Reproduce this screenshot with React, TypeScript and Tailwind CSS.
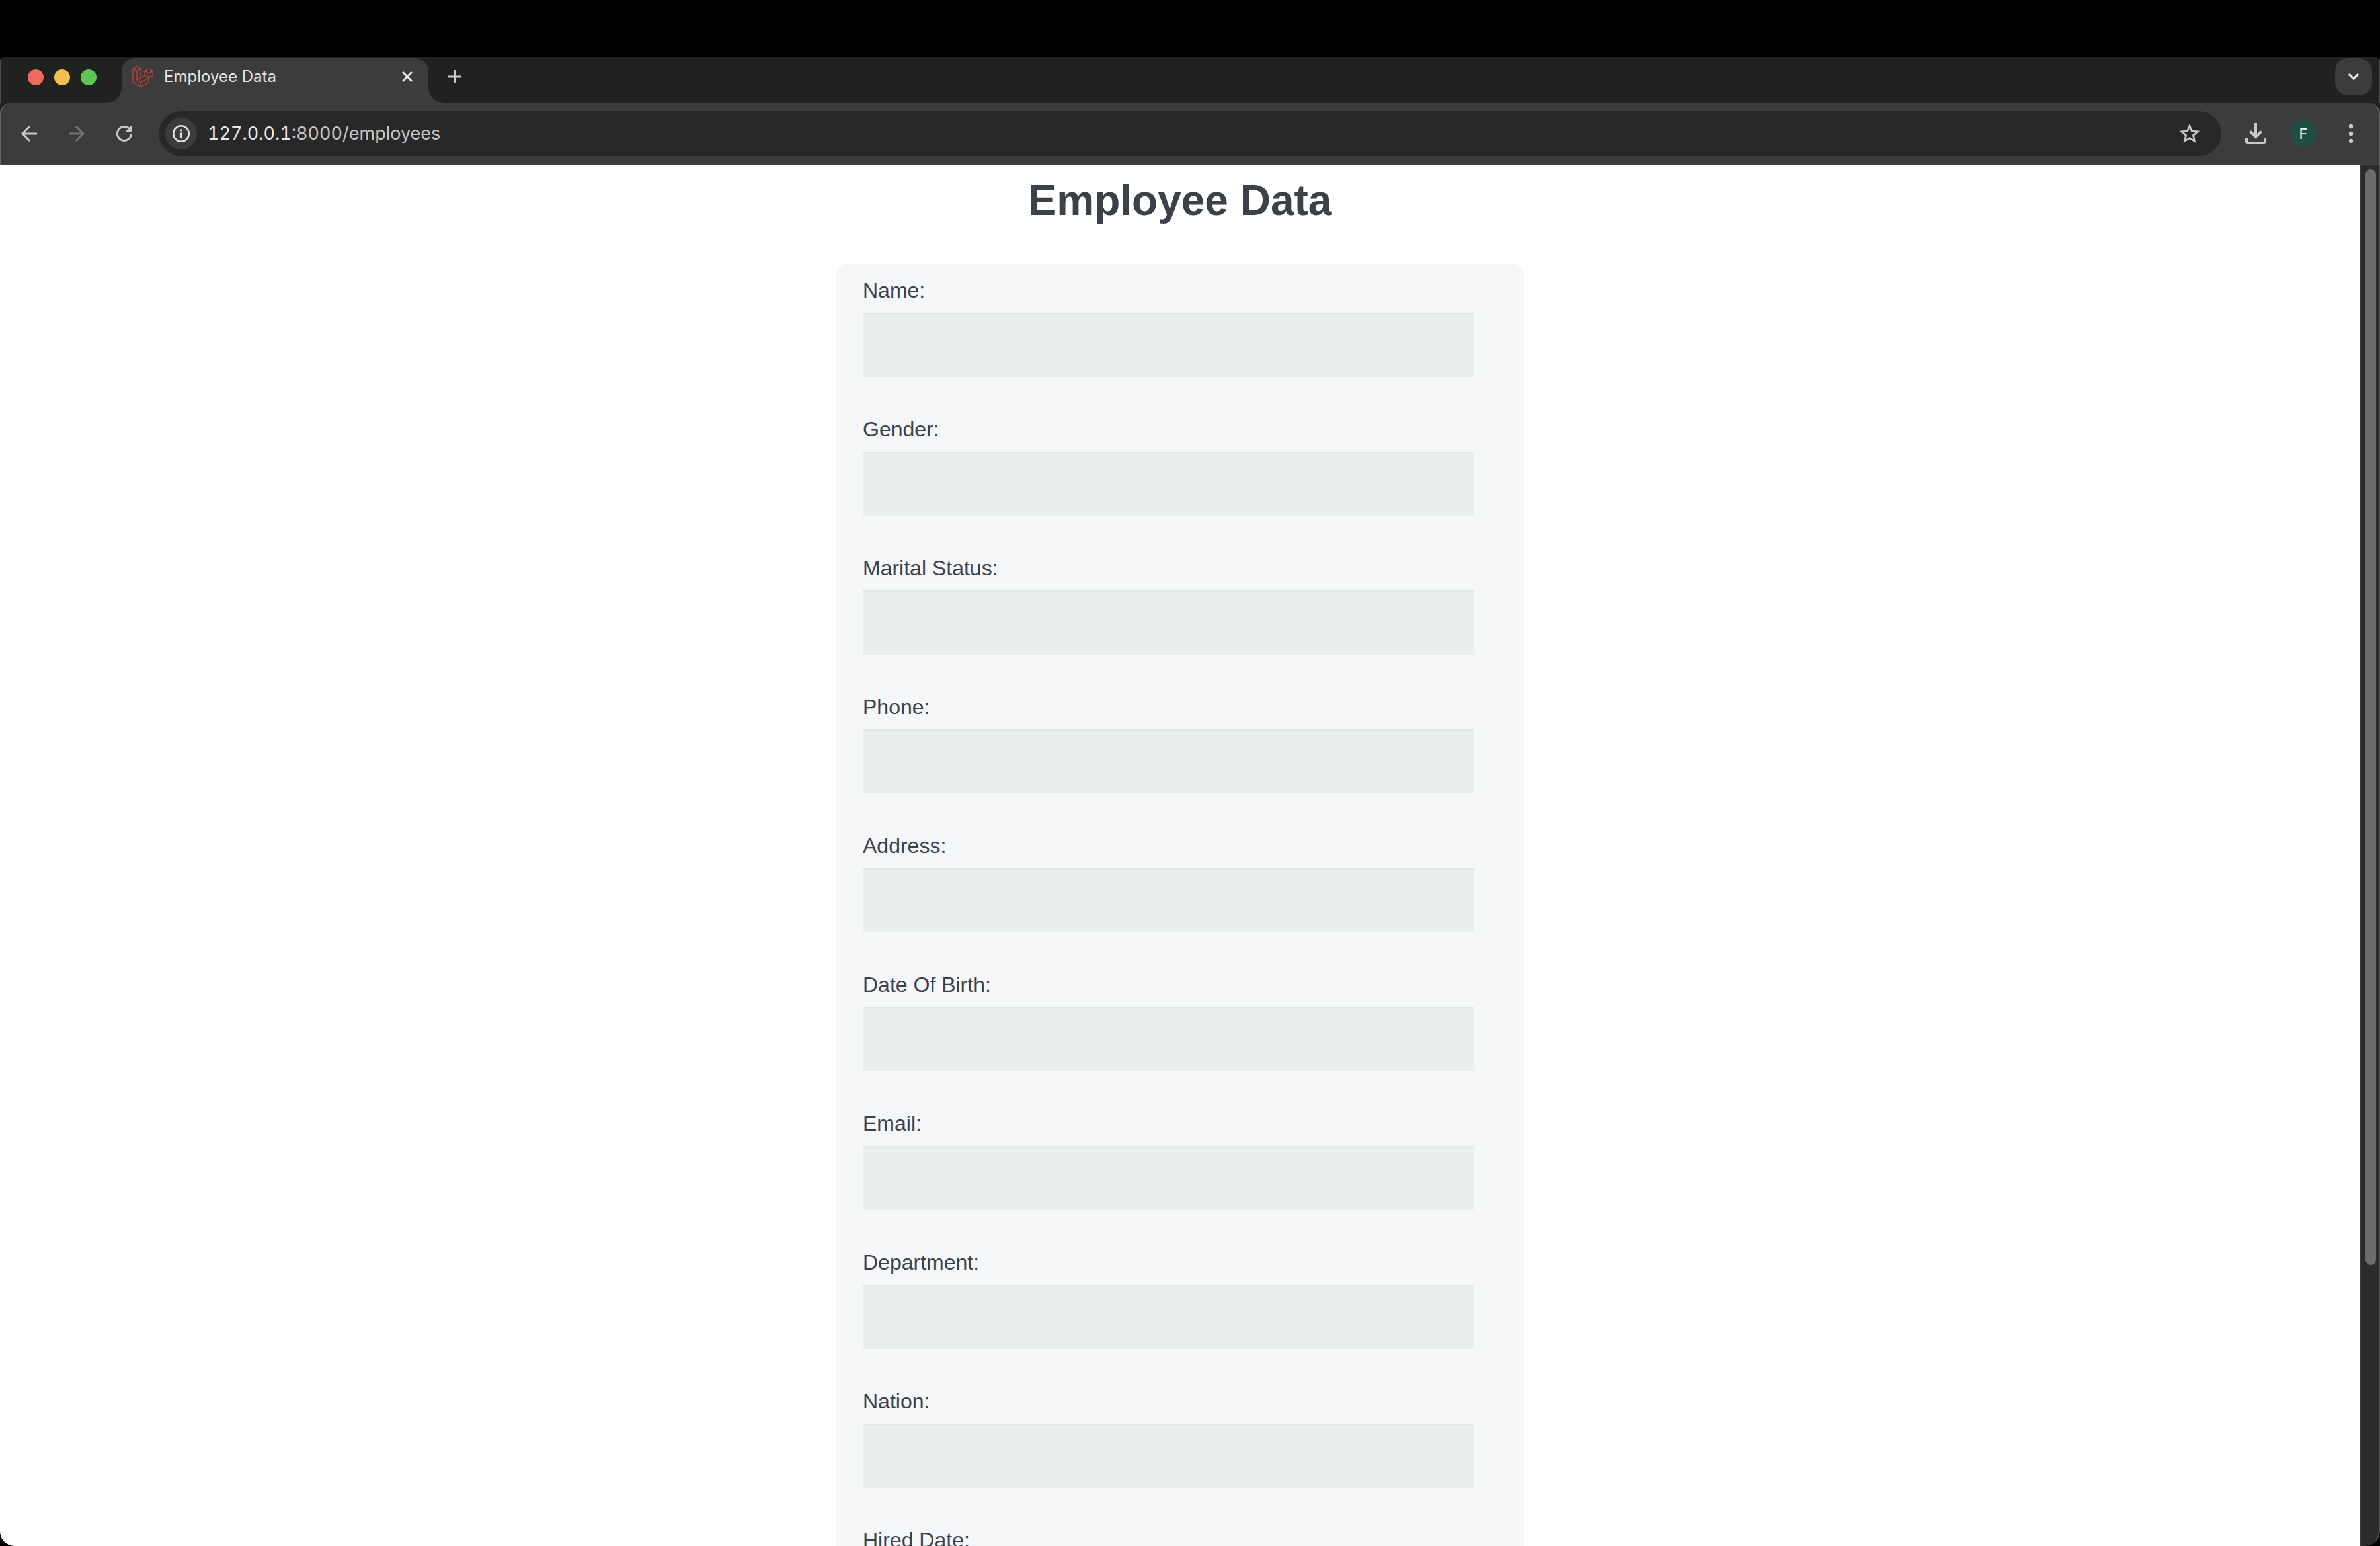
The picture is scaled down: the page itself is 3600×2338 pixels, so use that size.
import React from "react";
import { SiLaravel } from "react-icons/si";

const FIELDS = [
  { id: "name", label: "Name:" },
  { id: "gender", label: "Gender:" },
  { id: "marital-status", label: "Marital Status:" },
  { id: "phone", label: "Phone:" },
  { id: "address", label: "Address:" },
  { id: "date-of-birth", label: "Date Of Birth:" },
  { id: "email", label: "Email:" },
  { id: "department", label: "Department:" },
  { id: "nation", label: "Nation:" },
  { id: "hired-date", label: "Hired Date:" },
];

function TabStrip() {
  return (
    <div className="flex h-[70px] items-start border-x-2 border-[#4c4d4c] bg-[#202220] pt-[2px]">
      <div className="flex h-[58px] w-[182px] shrink-0 items-center gap-4 pl-10">
        <button aria-label="Close window" className="size-6 rounded-full bg-[#ed6a5f]" />
        <button aria-label="Minimize window" className="size-6 rounded-full bg-[#f6be50]" />
        <button aria-label="Zoom window" className="size-6 rounded-full bg-[#61c555]" />
      </div>
      <div className="relative flex h-[68px] w-[464px] shrink-0 items-start rounded-t-[20px] bg-[#3c3c3c] px-4 pt-3">
        <svg className="absolute bottom-0 -left-6 size-6" viewBox="0 0 24 24" aria-hidden="true">
          <path d="M24 0v24H0A24 24 0 0 0 24 0Z" fill="#3c3c3c" />
        </svg>
        <svg className="absolute -right-6 bottom-0 size-6" viewBox="0 0 24 24" aria-hidden="true">
          <path d="M0 0v24h24A24 24 0 0 1 0 0Z" fill="#3c3c3c" />
        </svg>
        <SiLaravel className="size-8 shrink-0 text-[#f0402f]" aria-hidden="true" />
        <span className="ml-4 flex-1 text-2xl leading-8 text-[#e3e3e3]">Employee Data</span>
        <button aria-label="Close tab" className="flex size-8 items-center justify-center">
          <svg className="size-4" viewBox="0 0 16 16" fill="none" stroke="#e8e8e8" strokeWidth="3" aria-hidden="true">
            <path d="M1 1l14 14M15 1L1 15" />
          </svg>
        </button>
      </div>
      <button aria-label="New tab" className="ml-6 mt-3 flex size-8 shrink-0 items-center justify-center">
        <svg className="size-5" viewBox="0 0 20 20" fill="none" stroke="#c7c7c7" strokeWidth="3" aria-hidden="true">
          <path d="M10 0v20M0 10h20" />
        </svg>
      </button>
      <div className="flex-1" />
      <button
        aria-label="Search tabs"
        className="mr-[10px] flex size-14 shrink-0 items-center justify-center rounded-[20px] bg-[#3c3c3c]"
      >
        <svg className="size-5" viewBox="0 0 20 20" fill="none" stroke="#e3e3e3" strokeWidth="3.400" aria-hidden="true">
          <path d="M2.800 6L10 13.200 17.200 6" />
        </svg>
      </button>
    </div>
  );
}

function Toolbar() {
  return (
    <div className="bg-[#202220]">
      <div className="flex h-[94px] items-center rounded-t-[16px] border-x-2 border-b-2 border-x-[#666666] border-b-[#474546] bg-[#3c3c3c] px-[26px]">
        <button aria-label="Back" className="mr-10 flex size-8 items-center justify-center">
          <svg className="size-6" viewBox="0 0 24 24" fill="none" stroke="#c7c7c7" strokeWidth="3" aria-hidden="true">
            <path d="M13 1L2 12l11 11M2 12h22" />
          </svg>
        </button>
        <button aria-label="Forward" className="mr-10 flex size-8 items-center justify-center">
          <svg className="size-6" viewBox="0 0 24 24" fill="none" stroke="#757575" strokeWidth="3" aria-hidden="true">
            <path d="M11 1l11 11-11 11M22 12H0" />
          </svg>
        </button>
        <button aria-label="Reload" className="mr-9 flex size-8 items-center justify-center">
          <svg className="size-6" viewBox="0 0 24 24" fill="none" stroke="#c7c7c7" strokeWidth="3" aria-hidden="true">
            <path d="M22.400 13A10.500 10.500 0 1 1 20.500 5.800L22 8" />
            <path d="M22.500 0v8.500H14" />
          </svg>
        </button>
        <form
          className="flex h-[68px] min-w-0 flex-1 items-center rounded-full bg-[#282828] pl-[10px] pr-8"
          onSubmit={(e) => e.preventDefault()}
        >
          <button
            type="button"
            aria-label="View site information"
            className="flex size-12 shrink-0 items-center justify-center rounded-full bg-[#3c3c3c]"
          >
            <svg className="size-7" viewBox="0 0 28 28" fill="none" stroke="#e3e3e3" strokeWidth="2.600" aria-hidden="true">
              <circle cx="14" cy="14" r="11.800" />
              <path d="M14 12.500v8M14 7.500v2.800" />
            </svg>
          </button>
          <a href="#employees" className="ml-4 flex-1 text-[27px] leading-9 tabular-nums text-[#c7c7c7]">
            <span className="text-[#e8e8e8]">127.0.0.1</span>:8000/employees
          </a>
          <button type="button" aria-label="Bookmark this tab" className="flex size-8 items-center justify-center">
            <svg className="size-8" viewBox="0 0 32 32" fill="none" stroke="#c7c7c7" strokeWidth="2.800" aria-hidden="true">
              <path d="M16 4.200l3.400 7.900 8.600.8-6.500 5.700 1.900 8.500L16 22.600l-7.400 4.500 1.900-8.500L4 12.900l8.600-.8Z" />
            </svg>
          </button>
        </form>
        <button aria-label="Downloads" className="ml-9 flex size-8 items-center justify-center">
          <svg className="size-8" viewBox="0 0 32 32" fill="none" stroke="#c7c7c7" strokeWidth="4" aria-hidden="true">
            <path d="M16 0v21M7.500 12.500L16 21l8.500-8.500" />
            <path d="M2 22v6q0 2 2 2h24q2 0 2-2v-6" />
          </svg>
        </button>
        <button
          aria-label="Profile"
          className="ml-9 flex size-10 shrink-0 items-center justify-center rounded-full bg-[#1f4e43] text-[22px] leading-none text-white"
        >
          F
        </button>
        <button aria-label="Menu" className="ml-9 flex size-8 items-center justify-center">
          <svg className="size-8" viewBox="0 0 32 32" fill="#c7c7c7" aria-hidden="true">
            <circle cx="16" cy="5" r="3.200" />
            <circle cx="16" cy="16" r="3.200" />
            <circle cx="16" cy="27" r="3.200" />
          </svg>
        </button>
      </div>
    </div>
  );
}

function EmployeeForm() {
  return (
    <main className="min-w-0 flex-1 overflow-hidden bg-white pt-4 font-['Liberation_Sans',Arial,sans-serif] text-[#3c4148]">
      <h1 className="mb-[60px] text-center text-[64px] font-bold leading-[74px]">Employee Data</h1>
      <form className="mx-auto flex max-w-[1040px] flex-col gap-[61px] rounded-[16px] bg-[#f5f7f9] px-10 pb-10 pt-[21px]">
        {FIELDS.map((field) => (
          <div key={field.id} className="flex flex-col gap-4 pr-9">
            <label htmlFor={field.id} className="text-[32px] leading-9">
              {field.label}
            </label>
            <input
              id={field.id}
              name={field.id}
              type="text"
              className="h-[97px] w-full border-t-2 border-[#e0e7e6] bg-[#e8efee] px-4 text-[32px] outline-none"
            />
          </div>
        ))}
      </form>
    </main>
  );
}

export default function App() {
  return (
    <div className="flex h-screen flex-col overflow-hidden bg-black pt-[86px] font-['Inter',sans-serif]">
      <div className="flex min-h-0 flex-1 flex-col overflow-hidden rounded-b-[22px] rounded-t-[6px]">
        <TabStrip />
        <Toolbar />
        <div className="flex min-h-0 flex-1">
          <EmployeeForm />
          <div className="w-[30px] shrink-0 rounded-br-[22px] border-l-2 border-r-2 border-l-[#3c3c3c] border-r-[#575757] bg-[#2b2b2b] pl-[6px] pt-[6px]">
            <div className="h-[79.6%] w-4 rounded-full bg-[#6b6b6b]" />
          </div>
        </div>
      </div>
    </div>
  );
}
